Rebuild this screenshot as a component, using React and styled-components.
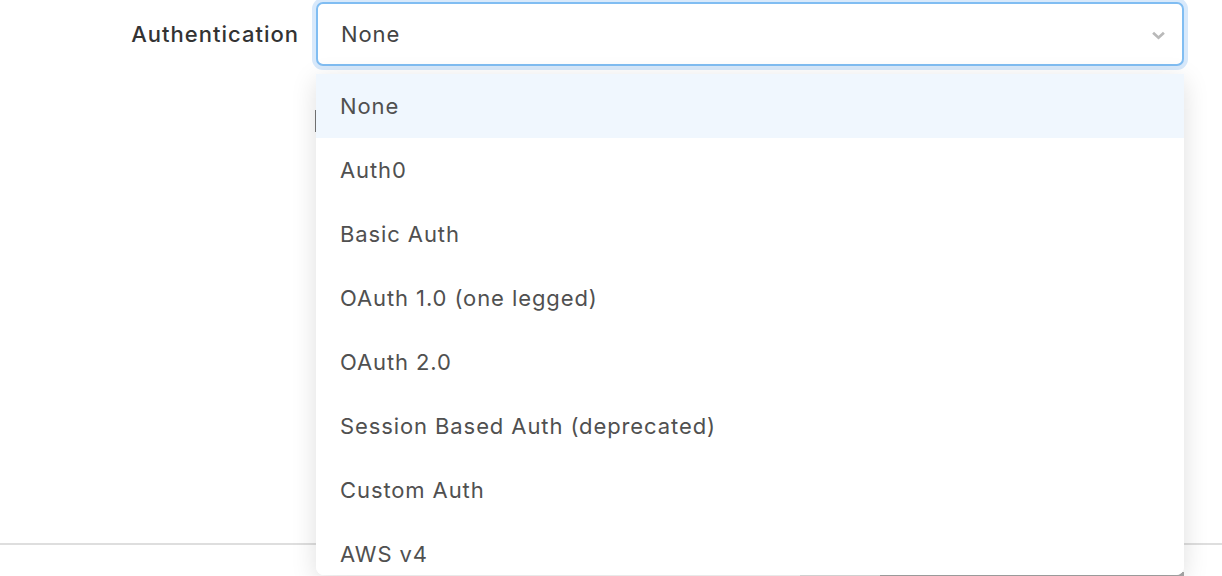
import React, { useState } from 'react'
import styled, { createGlobalStyle } from 'styled-components'

const options = [
  'None',
  'Auth0',
  'Basic Auth',
  'OAuth 1.0 (one legged)',
  'OAuth 2.0',
  'Session Based Auth (deprecated)',
  'Custom Auth',
  'AWS v4',
]

const GlobalStyle = createGlobalStyle`
  html, body {
    margin: 0;
    padding: 0;
    background: #fff;
    font-family: Inter, "Noto Sans", sans-serif;
    overflow: hidden;
  }
`

const App = () => {
  const [value, setValue] = useState('None')

  return (
    <Page>
      <GlobalStyle />
      <FieldRow>
        <Label>Authentication</Label>
        <SelectWrap>
          <SelectBox>
            <span>{value}</span>
            <Chevron viewBox="0 0 16 10" width="15" height="9">
              <path d="M2 2l6 5.5 6-5.5" fill="none" stroke="#b9b9b9" strokeWidth="3" />
            </Chevron>
          </SelectBox>
          <Menu>
            {options.map((opt) => (
              <Option key={opt} active={opt === value} onClick={() => setValue(opt)}>
                {opt}
              </Option>
            ))}
          </Menu>
        </SelectWrap>
      </FieldRow>
      <Behind>
        <GhostInput />
      </Behind>
      <Divider />
      <Footer>
        <FooterButton light />
        <FooterButton />
      </Footer>
    </Page>
  )
}

const Page = styled.div`
  height: 576px;
  padding-top: 2px;
  box-sizing: border-box;
  overflow: hidden;
`

const FieldRow = styled.div`
  display: grid;
  grid-template-columns: 316px 1fr;
  padding-right: 38px;
  align-items: center;
  position: relative;
  z-index: 2;
`

const Label = styled.label`
  justify-self: end;
  padding-right: 17px;
  font-size: 22px;
  font-weight: 500;
  color: #333;
  letter-spacing: 1px;
`

const SelectWrap = styled.div`
  position: relative;
`

const SelectBox = styled.div`
  height: 64px;
  box-sizing: border-box;
  border: 2px solid #80bdf2;
  border-radius: 7px;
  box-shadow: 0 0 0 4px #d8e9fb;
  display: flex;
  align-items: center;
  justify-content: space-between;
  padding: 0 16px 0 23px;
  font-size: 22px;
  letter-spacing: 0.9px;
  color: #444;
  background: #fff;
`

const Chevron = styled.svg`
  display: block;
  margin-top: 2px;
`

const Menu = styled.ul`
  position: absolute;
  top: 72px;
  left: 0;
  right: 0;
  height: 501px;
  margin: 0;
  padding: 0;
  list-style: none;
  overflow: hidden;
  background: #fff;
  border-radius: 0 0 8px 8px;
  box-shadow: 0 6px 26px rgba(0, 0, 0, 0.13);
`

const Option = styled.li`
  height: 64px;
  display: flex;
  align-items: center;
  padding-left: 24px;
  font-size: 22px;
  letter-spacing: 0.9px;
  color: #505050;
  background: ${(p) => (p.active ? '#f0f7fe' : '#fff')};
  cursor: pointer;
`

const Behind = styled.div`
  display: grid;
  grid-template-columns: 315px 1fr;
  padding-right: 38px;
  margin-top: 44px;
  height: 416px;
`

const GhostInput = styled.div`
  grid-column: 2;
  height: 22px;
  border-left: 2px solid #777;
`

const Divider = styled.hr`
  margin: 17px 0 0;
  border: none;
  border-top: 2px solid #dedede;
`

const Footer = styled.div`
  display: flex;
  justify-content: flex-end;
  padding: 27px 38px 0 0;
`

const FooterButton = styled.div`
  width: ${(p) => (p.light ? '80px' : '304px')};
  height: 40px;
  background: ${(p) => (p.light ? '#e4e4e4' : '#a9a9a9')};
`

export default App
